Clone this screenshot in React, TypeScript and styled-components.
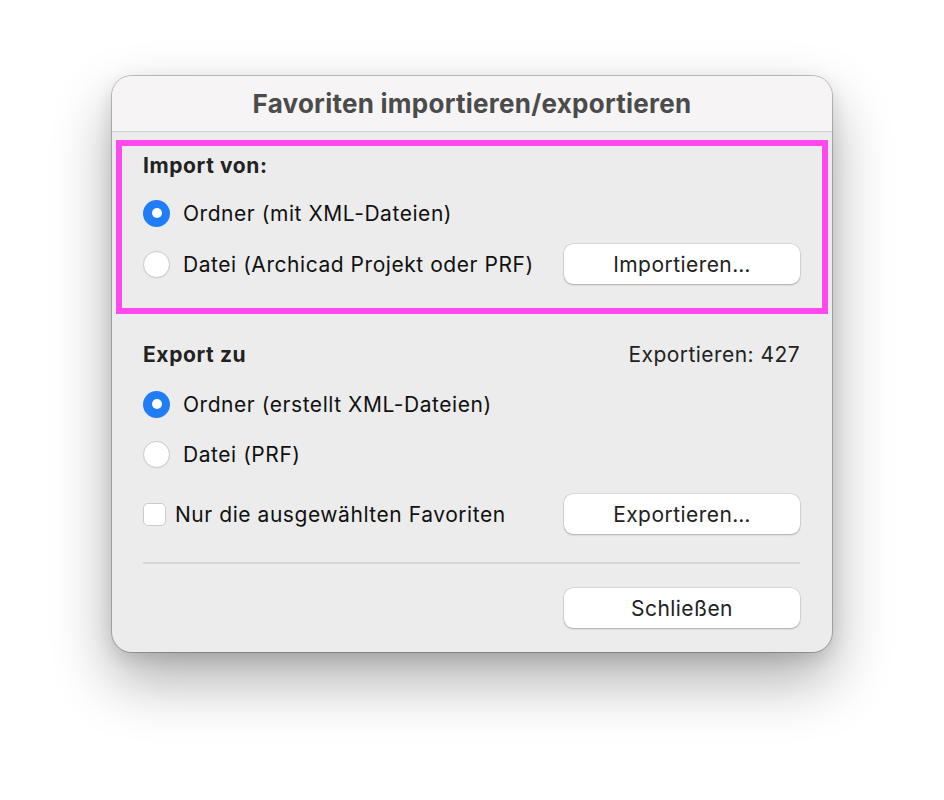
import React from "react";
import styled, { createGlobalStyle } from "styled-components";

const GlobalStyle = createGlobalStyle`
  html, body {
    margin: 0;
    padding: 0;
    background: #ffffff;
    font-family: Inter, "Noto Sans", "Liberation Sans", sans-serif;
  }
`;

const Page = styled.div`
  width: 944px;
  height: 800px;
  padding: 76px 0 0 112px;
  box-sizing: border-box;
`;

const Window = styled.div`
  width: 720px;
  background: #ececec;
  border-radius: 20px;
  overflow: hidden;
  box-shadow: 0 0 0 1px rgba(0, 0, 0, 0.22), 0 28px 60px rgba(0, 0, 0, 0.32),
    0 6px 18px rgba(0, 0, 0, 0.12);
`;

const TitleBar = styled.div`
  height: 55px;
  background: #f6f4f4;
  border-bottom: 1px solid #d3d1d1;
  display: flex;
  align-items: center;
  justify-content: center;
  font-size: 26px;
  font-weight: 700;
  letter-spacing: 0.25px;
  color: #4b4b4b;
`;

const Body = styled.div`
  padding: 8px 4px 24px 4px;
`;

// the pink annotation frame round the import part
const Highlight = styled.div`
  border: 6px solid #ff48ee;
  padding: 7px 22px 24px 21px;
`;

const Section = styled.div`
  padding: 0 28px 0 27px;
`;

const Row = styled.div<{ $mt?: number; $h?: number }>`
  display: flex;
  align-items: center;
  justify-content: space-between;
  height: ${(p) => p.$h ?? 40}px;
  margin-top: ${(p) => p.$mt ?? 0}px;
`;

const Heading = styled.div`
  font-size: 21px;
  font-weight: 700;
  letter-spacing: 0.6px;
  color: #222;
`;

const Info = styled.div`
  font-size: 21px;
  letter-spacing: 0.45px;
  color: #222;
`;

const Choice = styled.label`
  display: flex;
  align-items: center;
  font-size: 21px;
  letter-spacing: 0.55px;
  color: #111;
`;

const Radio = styled.span<{ $on?: boolean }>`
  width: 27px;
  height: 27px;
  border-radius: 50%;
  box-sizing: border-box;
  margin-right: 13px;
  display: flex;
  align-items: center;
  justify-content: center;
  background: ${(p) => (p.$on ? "#1f7ef7" : "#ffffff")};
  border: ${(p) => (p.$on ? "none" : "1px solid #cbcbcb")};
  box-shadow: ${(p) => (p.$on ? "none" : "0 0.5px 1px rgba(0,0,0,0.08)")};
  &::after {
    content: "";
    display: ${(p) => (p.$on ? "block" : "none")};
    width: 10px;
    height: 10px;
    border-radius: 50%;
    background: #fff;
  }
`;

const Checkbox = styled.span`
  width: 23px;
  height: 23px;
  box-sizing: border-box;
  border-radius: 5px;
  border: 1px solid #cbcbcb;
  background: #fff;
  margin-right: 9px;
`;

const Button = styled.button`
  width: 236px;
  height: 40px;
  border: none;
  border-radius: 9px;
  background: #ffffff;
  font-family: inherit;
  font-size: 21px;
  letter-spacing: 0.45px;
  color: #222;
  box-shadow: 0 0 0 0.5px rgba(0, 0, 0, 0.14), 0 1px 2px rgba(0, 0, 0, 0.22);
  cursor: default;
`;

const Separator = styled.hr`
  border: none;
  height: 2px;
  background: #d7d7d7;
  margin: 28px 0 0 0;
`;

export default function App() {
  return (
    <Page>
      <GlobalStyle />
      <Window>
        <TitleBar>Favoriten importieren/exportieren</TitleBar>
        <Body>
          <Highlight>
            <Row $h={24}>
              <Heading>Import von:</Heading>
            </Row>
            <Row $mt={16}>
              <Choice>
                <Radio $on />
                Ordner (mit XML-Dateien)
              </Choice>
            </Row>
            <Row $mt={11}>
              <Choice>
                <Radio />
                Datei (Archicad Projekt oder PRF)
              </Choice>
              <Button>Importieren…</Button>
            </Row>
          </Highlight>
          <Section>
            <Row $h={24} $mt={28}>
              <Heading>Export zu</Heading>
              <Info>Exportieren: 427</Info>
            </Row>
            <Row $mt={18}>
              <Choice>
                <Radio $on />
                Ordner (erstellt XML-Dateien)
              </Choice>
            </Row>
            <Row $mt={10}>
              <Choice>
                <Radio />
                Datei (PRF)
              </Choice>
            </Row>
            <Row $mt={20}>
              <Choice>
                <Checkbox />
                Nur die ausgewählten Favoriten
              </Choice>
              <Button>Exportieren…</Button>
            </Row>
            <Separator />
            <Row $mt={24}>
              <span />
              <Button>Schließen</Button>
            </Row>
          </Section>
        </Body>
      </Window>
    </Page>
  );
}
